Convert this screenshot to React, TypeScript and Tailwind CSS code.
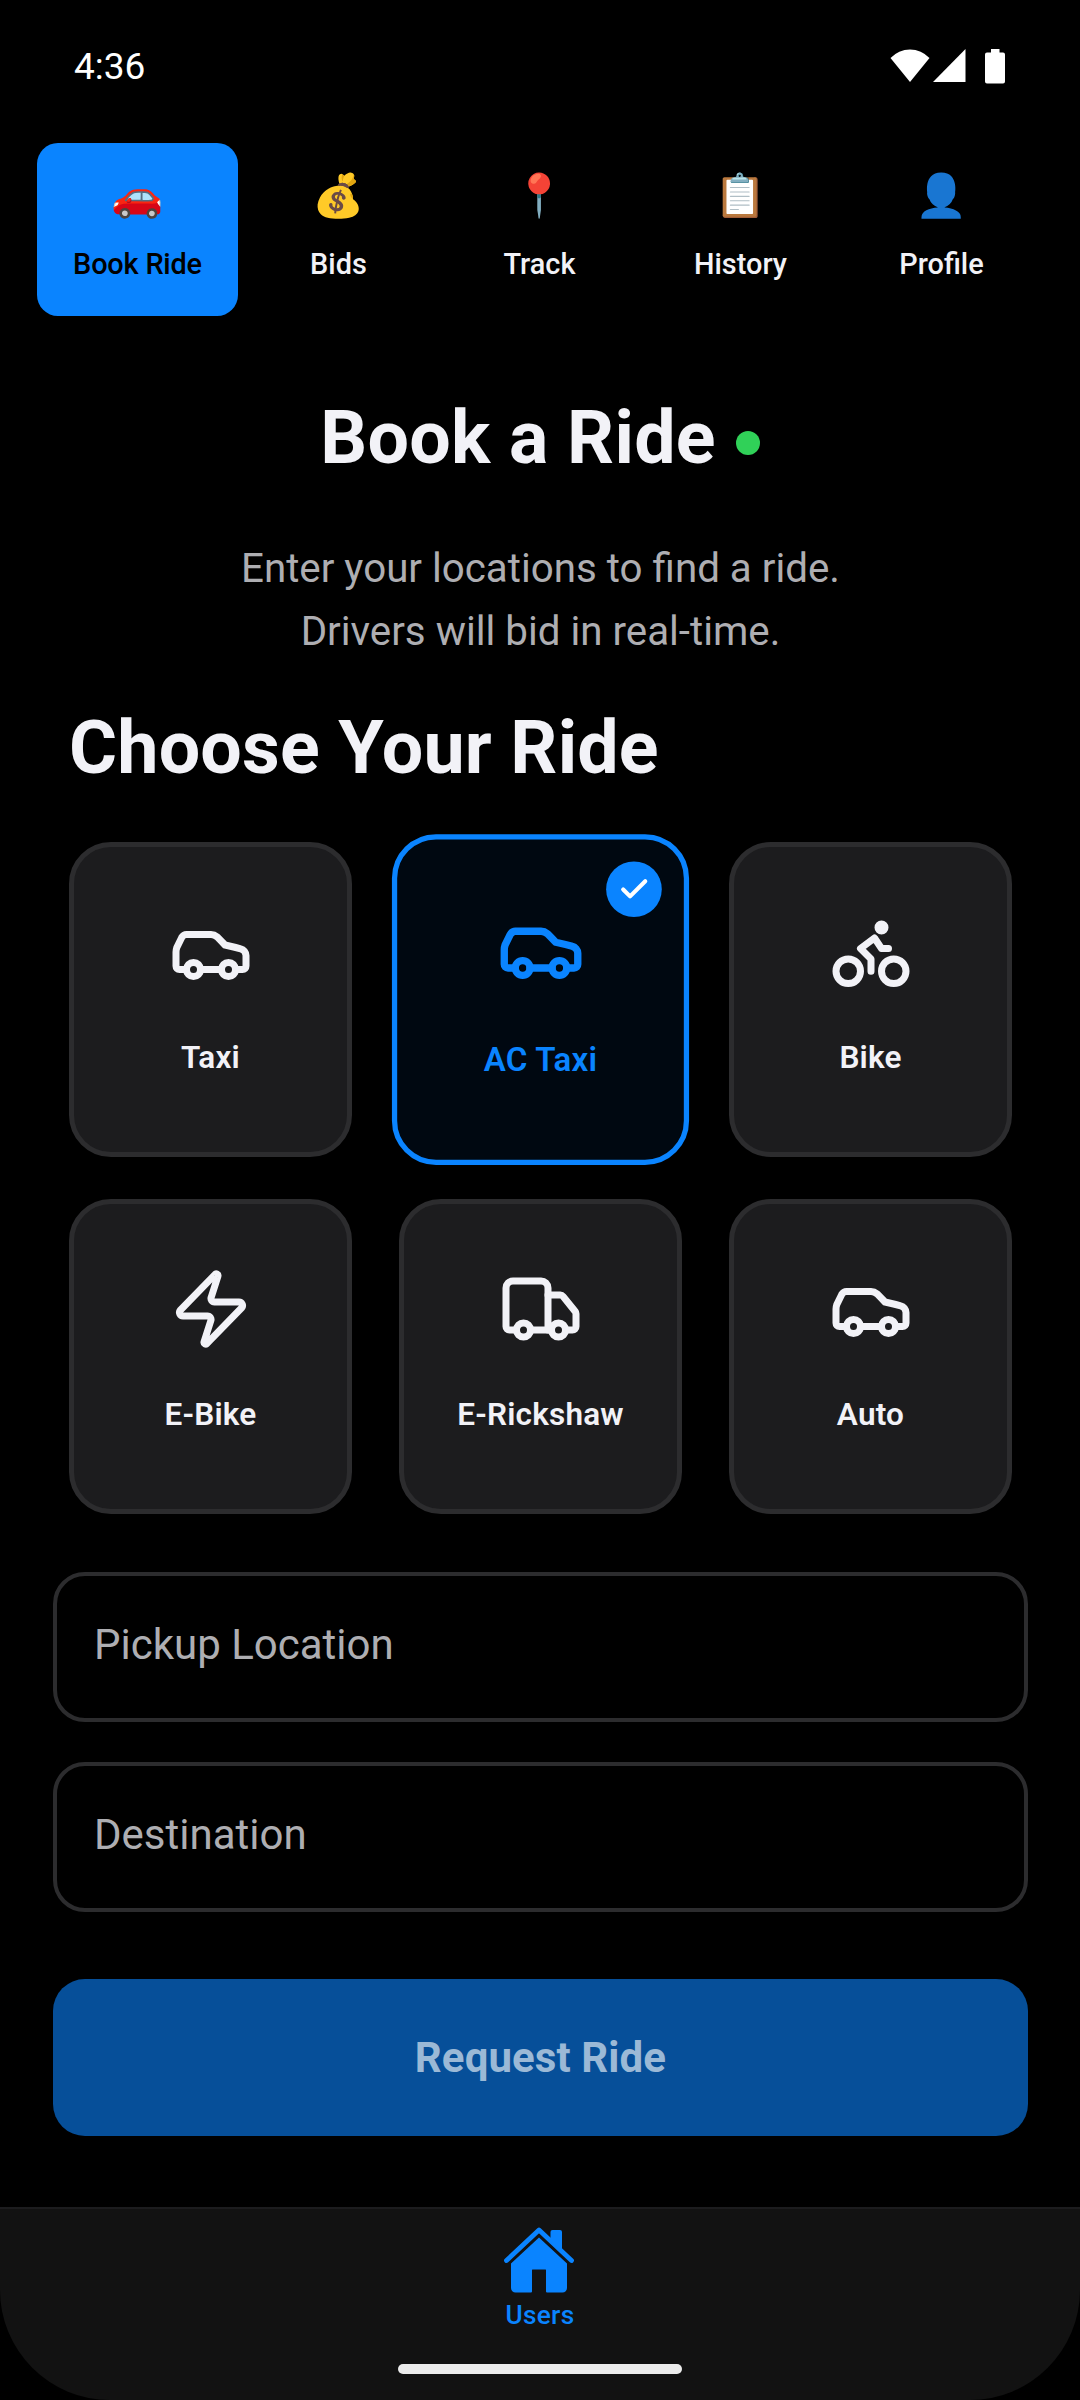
import { Bike, Car, Check, Truck, Zap } from "lucide-react";
import type { LucideIcon } from "lucide-react";

const tabs = [
  { icon: "🚗", label: "Book Ride", active: true },
  { icon: "💰", label: "Bids" },
  { icon: "📍", label: "Track" },
  { icon: "📋", label: "History" },
  { icon: "👤", label: "Profile" },
];

const rides: { icon: LucideIcon; label: string; selected?: boolean }[] = [
  { icon: Car, label: "Taxi" },
  { icon: Car, label: "AC Taxi", selected: true },
  { icon: Bike, label: "Bike" },
  { icon: Zap, label: "E-Bike" },
  { icon: Truck, label: "E-Rickshaw" },
  { icon: Car, label: "Auto" },
];

function StatusBar() {
  return (
    <div className="flex h-[131px] items-start justify-between pl-[74px] pr-[75px] pt-[45px]">
      <span className="text-[37px] leading-[43px] text-white">4:36</span>
      <svg className="mt-[4px] h-[35px] w-[115px]" viewBox="0 0 115 35" fill="white">
        <path d="M0.5 9 A26.5 26.5 0 0 1 39.5 9 L20 33 Z" />
        <path d="M43 33 L75.5 0 V33 Z" />
        <path d="M101 0h8.500v3.500h3.500a2 2 0 0 1 2 2v27a2 2 0 0 1 -2 2h-16a2 2 0 0 1 -2 -2v-27a2 2 0 0 1 2 -2h4z" />
      </svg>
    </div>
  );
}

function TabRow() {
  return (
    <nav className="ml-[37px] mr-[38px] mt-[12px] flex h-[173px]">
      {tabs.map((t) => (
        <div
          key={t.label}
          className={`flex flex-1 flex-col items-center rounded-[21px] pt-[22px] ${
            t.active ? "bg-[#0a84ff] text-black" : "text-[#f2f2f7]"
          }`}
        >
          <span className="mr-px h-[62px] text-[42px] leading-[62px]">{t.icon}</span>
          <span
            className={`mt-[20px] text-[28.9px] font-medium leading-[34px] ${
              t.active ? "tracking-[-0.2px]" : ""
            }`}
          >
            {t.label}
          </span>
        </div>
      ))}
    </nav>
  );
}

function RideCard({ icon: Icon, label, selected }: (typeof rides)[number]) {
  return (
    <div
      className={`relative flex h-[315px] flex-col items-center rounded-[42px] border-[5px] pt-[63px] ${
        selected
          ? "scale-105 border-[#0a84ff] bg-[#000811] text-[#0a84ff]"
          : "border-[#2c2c2e] bg-[#1c1c1e] text-[#f2f2f7]"
      }`}
    >
      <Icon className="ml-px size-[84px]" strokeWidth={2} />
      <span className="mt-[43px] text-[31.5px] font-semibold leading-[42px] tracking-[0.2px]">{label}</span>
      {selected && (
        <div className="absolute right-[21px] top-[21px] flex size-[53px] items-center justify-center rounded-full bg-[#0a84ff] text-white">
          <Check className="size-[31.5px]" strokeWidth={3} />
        </div>
      )}
    </div>
  );
}

function LocationField({ label }: { label: string }) {
  return (
    <div className="h-[150px] rounded-[32px] border-4 border-[#2c2c2e] pl-[37px] pt-[44px] text-[42px] leading-[50px] text-[#aeaeb2]">
      {label}
    </div>
  );
}

function HomeIcon() {
  return (
    <svg className="mr-[2px] h-[68px] w-[72px]" viewBox="0 0 72 68" fill="#0a84ff">
      <path d="M3.500 33.500 L36 3 L68.500 33.500" fill="none" stroke="#0a84ff" strokeWidth="4.8" strokeLinecap="round" strokeLinejoin="round" />
      <path d="M47.500 5a2 2 0 0 1 2-2h7.500a2 2 0 0 1 2 2v20l-11.500-10z" />
      <path d="M36 10.500 L64 36.500 V61a4.500 4.500 0 0 1 -4.500 4.500H44a1 1 0 0 1 -1 -1V43a.5 .5 0 0 0 -.5 -.5H29.500a.5 .5 0 0 0 -.5 .5V64.500a1 1 0 0 1 -1 1H12.500a4.500 4.500 0 0 1 -4.500 -4.500V36.500z" />
    </svg>
  );
}

export default function App() {
  return (
    <div className="h-[2400px] w-[1080px] bg-black">
      <div className="flex h-full flex-col overflow-hidden rounded-b-[110px] bg-black font-['Roboto',sans-serif]">
        <StatusBar />
        <TabRow />
        <main className="flex-1 pl-[53px] pr-[52px]">
          <div className="mt-[80px] flex items-center justify-center">
            <h1 className="text-[73.5px] font-bold leading-[84px] tracking-[0.26px] text-[#f2f2f7]">Book a Ride</h1>
            <span className="ml-[20px] mr-px mt-[10px] size-[24px] rounded-full bg-[#30d158]" />
          </div>
          <p className="mt-[57px] text-center text-[40.3px] leading-[63px] text-[#aeaeb2]">
            Enter your locations to find a ride.
            <br />
            Drivers will bid in real-time.
          </p>
          <h2 className="ml-[16px] mt-[43px] text-[73.5px] font-bold leading-[84px] tracking-[0.2px] text-[#f2f2f7]">Choose Your Ride</h2>
          <section className="mx-[16px] mt-[52px] grid grid-cols-3 gap-x-[47px] gap-y-[42px]">
            {rides.map((r) => (
              <RideCard key={r.label} {...r} />
            ))}
          </section>
          <div className="mt-[58px] flex flex-col gap-[40px]">
            <LocationField label="Pickup Location" />
            <LocationField label="Destination" />
          </div>
          <button className="mt-[67px] block h-[157px] w-full rounded-[32px] bg-[#064f99] text-[42px] font-bold tracking-[0.1px] text-[#9bb9d6]">
            Request Ride
          </button>
        </main>
        <footer className="flex h-[193px] flex-col items-center border-t-2 border-[#1c1c1e] bg-[#121212] pt-[18px]">
          <HomeIcon />
          <span className="mt-[5px] text-[26.25px] font-medium leading-[31px] tracking-[0.3px] text-[#0a84ff]">Users</span>
          <div className="mt-[33px] h-[10px] w-[284px] rounded-full bg-[#ececec]" />
        </footer>
      </div>
    </div>
  );
}
